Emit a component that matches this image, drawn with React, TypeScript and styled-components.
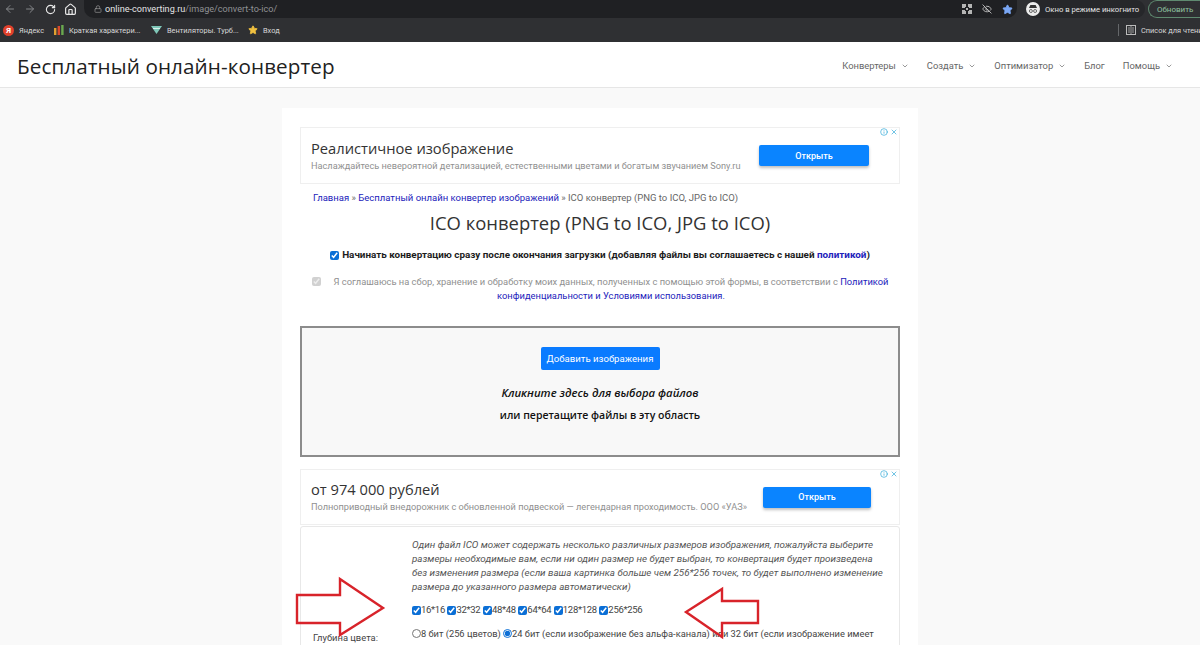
import React from "react";
import styled, { createGlobalStyle } from "styled-components";
import { ArrowLeft, ArrowRight, RotateCw, Home, Lock, Star, EyeOff, ChevronDown, Info, X } from "lucide-react";

const Global = createGlobalStyle`
  html, body { margin: 0; padding: 0; height: 645px; overflow: hidden; background: #f9f9f9; }
  body { font-family: Roboto, "Open Sans", sans-serif; color: #222; }
  #root { position: relative; height: 645px; overflow: hidden; }
`;

const Chrome = styled.div`
  height: 42px; background: #2f3033; display: flex; flex-direction: column;
`;
const TopRow = styled.div`
  height: 18px; display: flex; align-items: center; color: #d8d8d8;
`;
const NavIcon = styled.span<{ $dim?: boolean }>`
  width: 20px; display: flex; justify-content: center; color: ${p => (p.$dim ? "#85878a" : "#e8e8e8")};
`;
const AddressBar = styled.div`
  margin-left: 4px; width: 933px; height: 18px; background: #1f2023; border-radius: 0 0 10px 10px;
  display: flex; align-items: center; padding: 0 4px 0 10px; box-sizing: border-box; font-size: 9.1px; color: #8f9194;
`;
const Host = styled.span` color: #e4e4e4; margin-left: 3px; `;
const BarIcons = styled.div` margin-left: auto; display: flex; align-items: center; gap: 10px; `;
const Incognito = styled.div`
  margin-left: 9px; width: 119px; height: 18px; border-radius: 9px; background: #26272a; color: #e4e4e4;
  display: flex; align-items: center; gap: 5px; font-size: 7.7px; white-space: nowrap; box-sizing: border-box;
`;
const IncognitoIcon = styled.svg` flex: none; `;
const Update = styled.div`
  margin-left: 3px; width: 52px; height: 18px; box-sizing: border-box; border: 1px solid #5f8a70; border-right: 0;
  border-radius: 9px 0 0 9px; color: #8fc3a0; font-size: 8px; display: flex; align-items: center; padding-left: 8px;
`;
const BookRow = styled.div`
  height: 24px; display: flex; align-items: center; padding-left: 3px; color: #d8d8d8; font-size: 7.4px; white-space: nowrap;
`;
const Bookmark = styled.div<{ $w: number }>`
  width: ${p => p.$w}px; display: flex; align-items: center; gap: 5px;
`;
const YandexDot = styled.span`
  width: 11px; height: 11px; border-radius: 50%; background: #e0402b; color: #fff; font-size: 8px; line-height: 11px; text-align: center; font-weight: 700;
`;
const Reading = styled.div`
  margin-left: auto; display: flex; align-items: center; gap: 5px; width: 82px; overflow: hidden;
`;
const ReadingIcon = styled.svg` flex: none; `;
const Sep = styled.span` width: 1px; height: 12px; background: #65676a; margin-right: 2px; flex: none; `;

const Header = styled.header`
  height: 46px; background: #fff; border-bottom: 1px solid #e6e6e6; box-sizing: border-box; display: flex; align-items: center; padding: 2px 0 0 17px;
`;
const Brand = styled.div` font: 400 20.65px "Open Sans", sans-serif; color: #222; white-space: nowrap; letter-spacing: .1px; `;
const Nav = styled.nav`
  margin-left: auto; display: flex; align-items: center; gap: 18px; margin-right: 27px; font-size: 9.4px; color: #666;
`;
const NavItem = styled.span` display: flex; align-items: center; gap: 5px; white-space: nowrap; `;

const Card = styled.main`
  width: 636px; margin: 20px auto 0; padding: 19px 18px 0; box-sizing: border-box; background: #fff;
`;
const Ad = styled.section<{ $h: number }>`
  height: ${p => p.$h}px; border: 1px solid #efefef; box-sizing: border-box; position: relative;
  display: flex; align-items: center; justify-content: space-between;
`;
const AdText = styled.div` padding-left: 10px; `;
const AdTitle = styled.div` font: 400 14.7px/18px "Open Sans", sans-serif; color: #333; margin-bottom: 2px; white-space: nowrap; `;
const AdSub = styled.div` font-size: 9.2px; color: #909090; line-height: 14px; white-space: nowrap; `;
const AdButton = styled.button<{ $w: number; $mr: number }>`
  flex: none; width: ${p => p.$w}px; height: 21px; margin-right: ${p => p.$mr}px; border: 0; border-radius: 2px; background: #0a84ff; color: #fff;
  font: 500 9px Roboto, sans-serif; box-shadow: 0 2px 3px rgba(0,0,0,.25);
`;
const AdMarks = styled.div`
  position: absolute; top: 0; right: 1px; display: flex; gap: 2px; color: #2aa6d6;
`;
const Crumbs = styled.div` font-size: 9.5px; color: #666; margin: 7px 0 0 13px; line-height: 13px; white-space: nowrap; `;
const BlueLink = styled.a` color: #2222bb; text-decoration: none; `;
const Title = styled.h1` margin: 6px 0 0; font: 400 18.45px/26px "Open Sans", sans-serif; text-align: center; color: #333; white-space: nowrap; `;
const AutoRow = styled.div`
  margin-top: 12px; display: flex; align-items: center; justify-content: center; gap: 3px;
  font-size: 9.9px; font-weight: 700; color: #1c1c1c; line-height: 14px; white-space: nowrap;
`;
const Check = styled.input.attrs({ type: "checkbox", readOnly: true })`
  width: 9px; height: 9px; margin: 0; flex: none; accent-color: #0b6fd6;
`;
const Consent = styled.div`
  margin-top: 13px; font-size: 9.35px; color: #909090; text-align: center; line-height: 14px; position: relative; padding-left: 22px;
`;
const ConsentCheck = styled(Check)` position: absolute; left: 12px; top: 2px; `;
const Drop = styled.div`
  margin-top: 23px; height: 131px; box-sizing: border-box; border: 2px solid #8c8c8c; background: #f8f8f8;
  display: flex; flex-direction: column; align-items: center; padding-top: 19px; color: #111;
`;
const AddButton = styled.button`
  width: 119px; height: 23px; border: 0; padding: 0; border-radius: 2px; background: #0a7bff; color: #fff; font: 400 9.6px Roboto, sans-serif; margin-bottom: 12px; white-space: nowrap;
`;
const DropLine = styled.div<{ $it?: boolean }>`
  font-family: "Open Sans", sans-serif; font-size: ${p => (p.$it ? "11.3px" : "10.5px")}; font-weight: 600;
  line-height: 22px; font-style: ${p => (p.$it ? "italic" : "normal")}; white-space: nowrap;
`;
const Ad2 = styled(Ad)` margin-top: 12px; `;
const Panel = styled.section`
  margin-top: 1px; border: 1px solid #e8e8e8; border-radius: 3px; height: 200px; display: grid; grid-template-columns: 111px 1fr; box-sizing: border-box;
`;
const Labels = styled.div` font-size: 9.4px; color: #444; `;
const DepthLabel = styled.div` padding: 105px 0 0 12px; white-space: nowrap; `;
const Right = styled.div` padding: 11px 14px 0 0; color: #444; line-height: 14px; `;
const Note = styled.div` font-size: 9.8px; font-style: italic; color: #555; `;
const Sizes = styled.div` margin-top: 9px; display: flex; align-items: center; gap: 2.5px; font-size: 9.5px; letter-spacing: -.3px; line-height: 14px; white-space: nowrap; `;
const SizeItem = styled.label` display: inline-flex; align-items: center; `;
const Depth = styled.div` margin-top: 8px; font-size: 9.3px; line-height: 17px; `;
const Radio = styled.input.attrs({ type: "radio", readOnly: true })`
  width: 9px; height: 9px; margin: 0; vertical-align: -1px; accent-color: #0b6fd6;
`;
const ArrowOverlay = styled.svg`
  position: absolute; left: 0; top: 0; pointer-events: none;
`;

const sizes = ["16*16", "32*32", "48*48", "64*64", "128*128", "256*256"];

export default function App() {
  return (
    <>
      <Global />
      <Chrome>
        <TopRow>
          <NavIcon $dim><ArrowLeft size={12} /></NavIcon>
          <NavIcon $dim><ArrowRight size={12} /></NavIcon>
          <NavIcon><RotateCw size={11} strokeWidth={2.4} /></NavIcon>
          <NavIcon><Home size={13} strokeWidth={2.2} /></NavIcon>
          <AddressBar>
            <Lock size={8} color="#9a9a9a" />
            <Host>online-converting.ru</Host>/image/convert-to-ico/
            <BarIcons>
              <svg width="10" height="10" viewBox="0 0 10 10" fill="#b5b5b5">
                <rect x="0" y="0" width="4" height="4" /><rect x="6" y="0" width="4" height="4" />
                <rect x="0" y="6" width="4" height="4" /><rect x="6" y="6" width="4" height="4" />
                <rect x="3" y="3" width="4" height="4" fill="#1f2023" /><rect x="4" y="4" width="2" height="2" />
              </svg>
              <EyeOff size={10} color="#ccc" />
              <Star size={11} fill="#7aa7f5" color="#7aa7f5" />
            </BarIcons>
          </AddressBar>
          <Incognito>
            <IncognitoIcon width="14" height="14" viewBox="0 0 14 14">
              <circle cx="7" cy="7" r="7" fill="#ececec" />
              <path d="M3 6h8L9.6 3H4.400z" fill="#333" />
              <circle cx="4.900" cy="9" r="1.500" fill="none" stroke="#333" strokeWidth=".7" />
              <circle cx="9.100" cy="9" r="1.500" fill="none" stroke="#333" strokeWidth=".7" />
            </IncognitoIcon>
            Окно в режиме инкогнито
          </Incognito>
          <Update>Обновить</Update>
        </TopRow>
        <BookRow>
          <Bookmark $w={51}><YandexDot>Я</YandexDot>Яндекс</Bookmark>
          <Bookmark $w={97}>
            <svg width="10" height="10" viewBox="0 0 10 10"><rect x="0" y="3" width="2.4" height="7" fill="#e0a030" /><rect x="3.6" y="1" width="2.4" height="9" fill="#d9482b" /><rect x="7.200" y="0" width="2.4" height="10" fill="#6aa84f" /></svg>
            Краткая характери...
          </Bookmark>
          <Bookmark $w={97}>
            <svg width="11" height="10" viewBox="0 0 11 10"><path d="M0 1h11L5.500 9z" fill="#7fc7b8" /><path d="M2 3.500h7" stroke="#fff" strokeWidth=".7" /></svg>
            Вентиляторы. Турб...
          </Bookmark>
          <Bookmark $w={60}><Star size={10} fill="#f0c040" color="#f0c040" />Вход</Bookmark>
          <Reading>
            <Sep />
            <ReadingIcon width="10" height="10" viewBox="0 0 10 10"><rect x=".5" y=".5" width="9" height="9" fill="none" stroke="#bbb" /><path d="M5 .5v9M2 3h2M2 5h2M2 7h2M6 3h2M6 5h2M6 7h2" stroke="#bbb" strokeWidth=".8" /></ReadingIcon>
            <span>Список для чтения</span>
          </Reading>
        </BookRow>
      </Chrome>
      <Header>
        <Brand>Бесплатный онлайн-конвертер</Brand>
        <Nav>
          <NavItem>Конвертеры <ChevronDown size={8} /></NavItem>
          <NavItem>Создать <ChevronDown size={8} /></NavItem>
          <NavItem>Оптимизатор <ChevronDown size={8} /></NavItem>
          <NavItem>Блог</NavItem>
          <NavItem>Помощь <ChevronDown size={8} /></NavItem>
        </Nav>
      </Header>
      <Card>
        <Ad $h={57}>
          <AdText>
            <AdTitle>Реалистичное изображение</AdTitle>
            <AdSub>Наслаждайтесь невероятной детализацией, естественными цветами и богатым звучанием Sony.ru</AdSub>
          </AdText>
          <AdButton $w={110} $mr={30}>Открыть</AdButton>
          <AdMarks><Info size={8} /><X size={8} /></AdMarks>
        </Ad>
        <Crumbs>
          <BlueLink>Главная</BlueLink> » <BlueLink>Бесплатный онлайн конвертер изображений</BlueLink> » ICO конвертер (PNG to ICO, JPG to ICO)
        </Crumbs>
        <Title>ICO конвертер (PNG to ICO, JPG to ICO)</Title>
        <AutoRow>
          <Check defaultChecked />
          <span>Начинать конвертацию сразу после окончания загрузки (добавляя файлы вы соглашаетесь с нашей <BlueLink>политикой</BlueLink>)</span>
        </AutoRow>
        <Consent>
          <ConsentCheck defaultChecked disabled />
          Я соглашаюсь на сбор, хранение и обработку моих данных, полученных с помощью этой формы, в соответствии с <BlueLink>Политикой конфиденциальности и Условиями использования.</BlueLink>
        </Consent>
        <Drop>
          <AddButton>Добавить изображения</AddButton>
          <DropLine $it>Кликните здесь для выбора файлов</DropLine>
          <DropLine>или перетащите файлы в эту область</DropLine>
        </Drop>
        <Ad2 $h={56}>
          <AdText>
            <AdTitle>от 974 000 рублей</AdTitle>
            <AdSub>Полноприводный внедорожник с обновленной подвеской — легендарная проходимость. ООО «УАЗ»</AdSub>
          </AdText>
          <AdButton $w={108} $mr={28}>Открыть</AdButton>
          <AdMarks><Info size={8} /><X size={8} /></AdMarks>
        </Ad2>
        <Panel>
          <Labels><DepthLabel>Глубина цвета:</DepthLabel></Labels>
          <Right>
            <Note>Один файл ICO может содержать несколько различных размеров изображения, пожалуйста выберите размеры необходимые вам, если ни один размер не будет выбран, то конвертация будет произведена без изменения размера (если ваша картинка больше чем 256*256 точек, то будет выполнено изменение размера до указанного размера автоматически)</Note>
            <Sizes>
              {sizes.map(s => <SizeItem key={s}><Check defaultChecked />{s}</SizeItem>)}
            </Sizes>
            <Depth>
              <Radio name="d" />8 бит (256 цветов) <Radio name="d" defaultChecked />24 бит (если изображение без альфа-канала) или 32 бит (если изображение имеет альфа-канал)
            </Depth>
          </Right>
        </Panel>
      </Card>
      <ArrowOverlay width="1200" height="645" viewBox="0 0 1200 645">
        <path d="M297 595H340V579L383 608L340 635V623H297Z" fill="none" stroke="#d8232a" strokeWidth="2.400" />
        <path d="M758 601H722V589L686 612L722 637V623H758Z" fill="none" stroke="#d8232a" strokeWidth="2.400" />
      </ArrowOverlay>
    </>
  );
}
